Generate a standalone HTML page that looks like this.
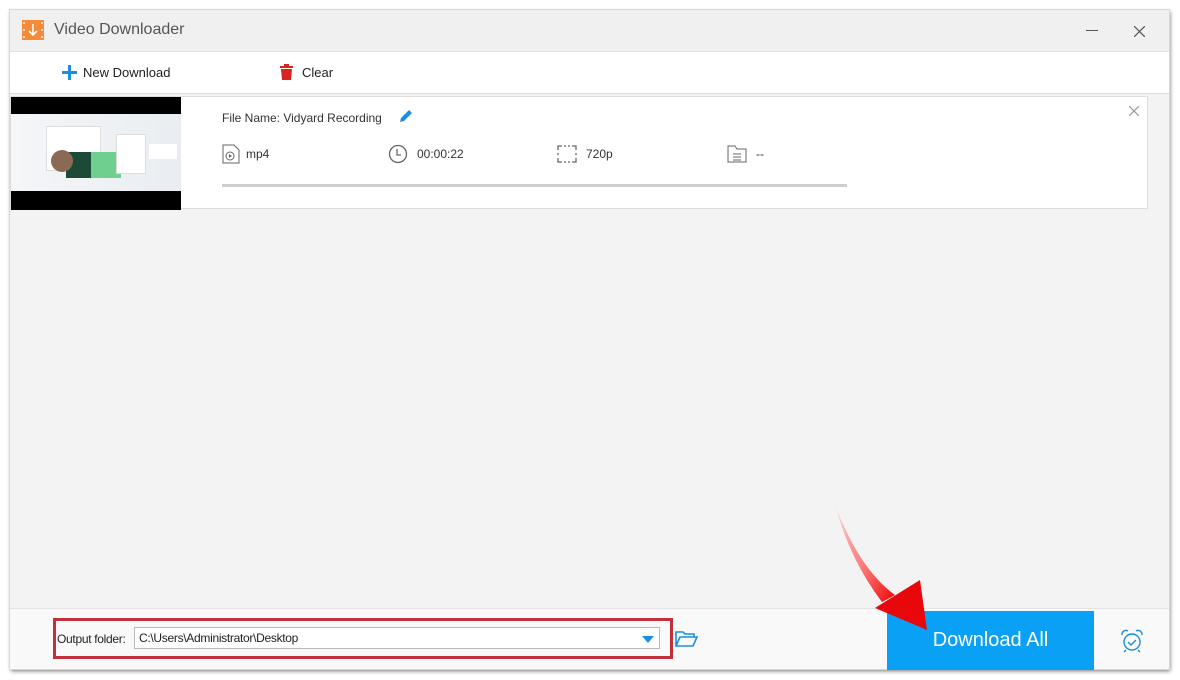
<!DOCTYPE html>
<html><head><meta charset="utf-8"><style>
*{box-sizing:border-box;margin:0;padding:0}
body{width:1180px;height:680px;background:#fff;font-family:"Liberation Sans",Arial,sans-serif;position:relative;overflow:hidden}
.win{position:absolute;left:10px;top:10px;width:1159px;height:659px;background:#f3f3f3;box-shadow:1px 2px 4px rgba(0,0,0,.55);outline:1px solid #d8d8d8}
.abs{position:absolute}
.title{left:0;top:0;width:100%;height:42px;background:#f0f0f0;border-bottom:1px solid #e2e2e2}
.tool{left:0;top:42px;width:100%;height:42px;background:#fff;border-bottom:1px solid #dcdcdc}
.card{left:0;top:86px;width:1138px;height:113px;background:#fff;border:1px solid #dcdcdc}
.bottom{left:0;top:598px;width:100%;height:61px;background:#f9f9f9;border-top:1px solid #e4e4e4}
.t{font-size:12px;color:#333}
</style></head><body>
<div class="win">
 <div class="abs title">
  <svg class="abs" style="left:12px;top:10px" width="22" height="20"><rect width="22" height="20" fill="#f58a3a"/><rect x="1" y="2" width="2" height="2" fill="#fff" opacity=".7"/><rect x="1" y="9" width="2" height="2" fill="#fff" opacity=".7"/><rect x="1" y="16" width="2" height="2" fill="#fff" opacity=".7"/><rect x="19" y="2" width="2" height="2" fill="#fff" opacity=".7"/><rect x="19" y="9" width="2" height="2" fill="#fff" opacity=".7"/><rect x="19" y="16" width="2" height="2" fill="#fff" opacity=".7"/><path d="M11 4v11M7 11l4 4 4-4" stroke="#fff" stroke-width="1.6" fill="none"/></svg>
  <div class="abs" style="left:44px;top:11px;font-size:16px;color:#555">Video Downloader</div>
  <div class="abs" style="left:1076px;top:20px;width:12px;height:1px;background:#555"></div>
  <svg class="abs" style="left:1124px;top:16px" width="11" height="11"><path d="M0 0L11 11M11 0L0 11" stroke="#555" stroke-width="1.2"/></svg>
 </div>
 <div class="abs tool">
  <svg class="abs" style="left:52px;top:13px" width="15" height="15"><path d="M7.5 0v15M0 7.5h15" stroke="#1a8fe0" stroke-width="3"/></svg>
  <div class="abs" style="left:73px;top:13px;color:#222;font-size:13px">New Download</div>
  <svg class="abs" style="left:270px;top:12px" width="13" height="16"><rect x="0" y="2" width="13" height="2" fill="#d9231d"/><rect x="4" y="0" width="5" height="2" fill="#d9231d"/><path d="M1 5h11l-1 11H2z" fill="#d9231d"/></svg>
  <div class="abs" style="left:292px;top:13px;color:#222;font-size:13px">Clear</div>
 </div>
 <div class="abs card">
  <div class="abs" style="left:0;top:0;width:170px;height:113px;background:#000"></div>
  <div class="abs" style="left:0;top:17px;width:170px;height:77px;background:linear-gradient(90deg,#f4f6f8,#e9edf2)">
   <div class="abs" style="left:35px;top:12px;width:55px;height:45px;background:#fff;border:1px solid #ddd"></div>
   <div class="abs" style="left:55px;top:38px;width:55px;height:26px;background:#6fcf8f"></div>
   <div class="abs" style="left:55px;top:38px;width:25px;height:26px;background:#1d4a36"></div>
   <div class="abs" style="left:40px;top:36px;width:22px;height:22px;border-radius:50%;background:#8a6a55"></div>
   <div class="abs" style="left:105px;top:20px;width:30px;height:40px;background:#fff;border:1px solid #ddd"></div>
   <div class="abs" style="left:138px;top:30px;width:28px;height:15px;background:#fff"></div>
  </div>
  <div class="abs t" style="left:211px;top:14px">File Name: Vidyard Recording</div>
  <svg class="abs" style="left:388px;top:12px" width="14" height="14"><path d="M1 13l1-4 8-8 3 3-8 8z" fill="#1a8fe0"/></svg>
  <svg class="abs" style="left:211px;top:47px" width="18" height="20"><path d="M1 1h11l5 5v13H1z" fill="none" stroke="#666"/><circle cx="8" cy="12" r="4" fill="none" stroke="#666"/><path d="M7 10v4l3-2z" fill="#666"/></svg>
  <div class="abs t" style="left:235px;top:50px">mp4</div>
  <svg class="abs" style="left:377px;top:47px" width="20" height="20"><circle cx="10" cy="10" r="8.5" fill="none" stroke="#666" stroke-width="1.3"/><path d="M9 5v6h4" fill="none" stroke="#666" stroke-width="1.3"/></svg>
  <div class="abs t" style="left:406px;top:50px">00:00:22</div>
  <svg class="abs" style="left:546px;top:48px" width="20" height="18" fill="none" stroke="#666" stroke-width="1.3"><path d="M1 5V1h4M15 1h4v4M19 13v4h-4M5 17H1v-4"/><path d="M7 1h6M7 17h6M1 8v2M19 8v2" stroke-dasharray="2 2"/></svg>
  <div class="abs t" style="left:575px;top:50px">720p</div>
  <svg class="abs" style="left:716px;top:48px" width="20" height="18" fill="none" stroke="#666"><path d="M1 1h7l2 3h9v13H1z"/><path d="M6 9h8M6 12h8M6 15h8"/></svg>
  <div class="abs t" style="left:745px;top:50px">--</div>
  <div class="abs" style="left:211px;top:87px;width:625px;height:3px;background:#cfcfcf"></div>
  <svg class="abs" style="left:1118px;top:9px" width="10" height="10"><path d="M0 0L10 10M10 0L0 10" stroke="#999" stroke-width="1.2"/></svg>
 </div>
 <div class="abs bottom">
  <div class="abs" style="left:43px;top:9px;width:620px;height:41px;border:3px solid #c0323b"></div>
  <div class="abs" style="left:47px;top:23px;font-size:12px;color:#222;letter-spacing:-.3px">Output folder:</div>
  <div class="abs" style="left:124px;top:18px;width:526px;height:22px;background:#fff;border:1px solid #b8b8b8;font-size:12px;color:#222;padding:3px 4px;letter-spacing:-.3px">C:\Users\Administrator\Desktop</div>
  <svg class="abs" style="left:632px;top:27px" width="12" height="7"><path d="M0 0h12L6 7z" fill="#1a8fe0"/></svg>
  <svg class="abs" style="left:665px;top:22px" width="23" height="16" fill="none" stroke="#1a8fe0" stroke-width="1.6"><path d="M1 15V1h7l2 2h9v3M1 15l4-9h17l-4 9z"/></svg>
  <div class="abs" style="left:877px;top:2px;width:207px;height:59px;background:#0aa0f6;color:#fff;font-size:20px;text-align:center;line-height:58px">Download All</div>
  <svg class="abs" style="left:1110px;top:20px" width="24" height="24" fill="none" stroke="#1a8fe0" stroke-width="1.4"><circle cx="12" cy="13" r="8"/><path d="M2 6a4 4 0 016-4M22 6a4 4 0 00-6-4M8 13l3 3 5-5M6 21l-2 2M18 21l2 2"/></svg>
 </div>
</div>
<svg class="abs" style="left:820px;top:500px" width="120" height="140"><defs><linearGradient id="g" x1="0" y1="0" x2="1" y2="1"><stop offset="0" stop-color="#ff0000" stop-opacity="0"/><stop offset=".5" stop-color="#f55" stop-opacity=".7"/><stop offset="1" stop-color="#e00"/></linearGradient></defs><path d="M15 5Q40 70 75 95L62 102Q30 60 15 5z" fill="url(#g)"/><path d="M55 108L107 130L100 80z" fill="#e8070b"/></svg>
</body></html>
